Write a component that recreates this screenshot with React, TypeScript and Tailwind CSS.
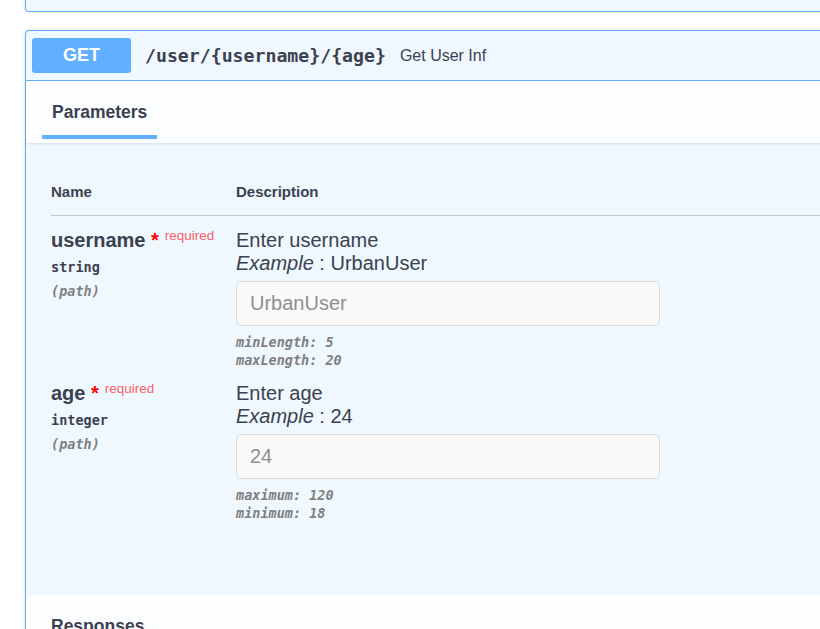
import React from "react";

const sans = "font-['Liberation_Sans',Arial,sans-serif]";
const mono = "font-['DejaVu_Sans_Mono',monospace]";

type Param = {
  name: string;
  type: string;
  description: string;
  example: string;
  rules: string[];
};

const params: Param[] = [
  {
    name: "username",
    type: "string",
    description: "Enter username",
    example: "UrbanUser",
    rules: ["minLength: 5", "maxLength: 20"],
  },
  {
    name: "age",
    type: "integer",
    description: "Enter age",
    example: "24",
    rules: ["maximum: 120", "minimum: 18"],
  },
];

function ParamRow({ p }: { p: Param }) {
  return (
    <div className="grid grid-cols-[185px_1fr] pt-[13px]">
      <div>
        <div className="text-[20px] leading-[22px] font-bold text-[#3b4151]">
          {p.name}
          <span className="text-[red]">&nbsp;*</span>
          <span className="relative -top-[7px] pl-[6px] text-[13.5px] font-normal text-[#f96266]">
            required
          </span>
        </div>
        <div className={`${mono} mt-[4px] text-[13.5px] leading-[18px] font-bold text-[#3b4151]`}>
          {p.type}
        </div>
        <div className={`${mono} mt-[6px] text-[13.5px] leading-[18px] font-bold italic text-[#808080]`}>
          (path)
        </div>
      </div>
      <div className="text-[#3b4151]">
        <p className="text-[20px] leading-[23px]">{p.description}</p>
        <div className="text-[20px] leading-[23px]">
          <i>Example</i> : {p.example}
        </div>
        <input
          placeholder={p.example}
          className={`${sans} mt-[6px] block w-[424px] h-[45px] px-[13px] text-[20px] bg-[#f9f9f9] border border-[#d9d9d9] rounded-[5px] outline-none placeholder:text-[#8f8f8f]`}
        />
        <div className={`${mono} mt-[7px] text-[13.5px] leading-[18px] font-bold italic text-[#808080]`}>
          {p.rules.map((r) => (
            <div key={r}>{r}</div>
          ))}
        </div>
      </div>
    </div>
  );
}

export default function App() {
  return (
    <div className={`${sans} w-[820px] h-[629px] overflow-hidden bg-white`}>
      <div className="pl-[25px] w-[860px]">
        {/* tail of the previous operation block */}
        <div className="h-[12px] border-l border-b border-[#61affe] rounded-bl-[4px] bg-[#eff7ff] shadow-[0_0_3px_rgba(0,0,0,0.19)]" />

        <div className="mt-[18px] border border-[#61affe] rounded-[4px] bg-[#eff7ff] shadow-[0_0_3px_rgba(0,0,0,0.19)]">
          <div className="flex items-center h-[50px] px-[6px] border-b border-[#61affe]">
            <div className="w-[99px] h-[35px] flex items-center justify-center rounded-[3px] bg-[#61affe] text-white text-[18px] font-bold">
              GET
            </div>
            <span className={`${mono} ml-[14px] text-[18.2px] font-bold text-[#3b4151]`}>
              /user/{"{username}"}/{"{age}"}
            </span>
            <span className="ml-[14px] text-[16px] text-[#3b4151]">Get User Inf</span>
          </div>

          <div className="h-[62px] bg-white/80 shadow-[0_1px_2px_rgba(0,0,0,0.1)] pl-[16px]">
            <div className="inline-block px-[10px] pt-[19px] pb-[11px] border-b-4 border-[#61affe] text-[17.5px] leading-[24px] font-bold text-[#3b4151]">
              Parameters
            </div>
          </div>

          <div className="pl-[25px] pt-[40px] pb-[73px]">
            <div className="grid grid-cols-[185px_1fr] pb-[14px] border-b border-[#3b4151]/25 text-[15px] leading-[18px] font-bold text-[#3b4151]">
              <div>Name</div>
              <div>Description</div>
            </div>
            {params.map((p) => (
              <ParamRow key={p.name} p={p} />
            ))}
          </div>

          <div className="h-[60px] bg-white/80 pl-[25px] pt-[19px]">
            <div className="text-[17.5px] leading-[24px] font-bold text-[#3b4151]">Responses</div>
          </div>
        </div>
      </div>
    </div>
  );
}
